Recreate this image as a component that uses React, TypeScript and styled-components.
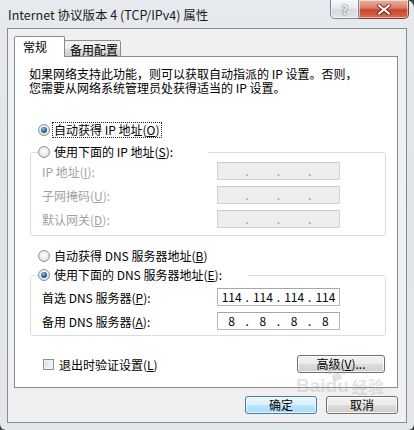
import styled, { createGlobalStyle } from 'styled-components';

const GlobalStyle = createGlobalStyle`
  html, body {
    margin: 0;
    padding: 0;
    background: #3c3f44;
  }
  body {
    font-family: "Noto Sans CJK SC", "Noto Sans", sans-serif;
  }
`;

const Window = styled.div`
  position: relative;
  width: 414px;
  height: 430px;
  display: flex;
  flex-direction: column;
  background: linear-gradient(180deg, #e6eaee 0%, #dfe4e9 45%, #e3e7eb 100%);
  border-radius: 0 8px 6px 6px;
  overflow: hidden;
`;

const TitleBar = styled.div`
  height: 28px;
  flex-shrink: 0;
  display: flex;
  align-items: flex-start;
`;

const Title = styled.div`
  padding: 7px 0 0 8px;
  font-size: 12.5px;
  line-height: 16px;
  color: #1b1b1b;
  white-space: nowrap;
`;

const Captions = styled.div`
  margin-left: auto;
  margin-right: 5px;
  display: flex;
`;

const CaptionButton = styled.div<{ $close?: boolean }>`
  box-sizing: border-box;
  width: ${p => (p.$close ? 50 : 29)}px;
  height: 20px;
  margin-top: -1px;
  border: 1px solid ${p => (p.$close ? '#7a3a30' : '#7d8590')};
  border-left-width: ${p => (p.$close ? 0 : 1)}px;
  border-radius: ${p => (p.$close ? '0 0 5px 0' : '0 0 0 5px')};
  background: ${p =>
    p.$close
      ? 'linear-gradient(180deg, #ecb3a6 0%, #dc7a63 45%, #c9452b 55%, #d86b4f 100%)'
      : 'linear-gradient(180deg, #f7f8fa 0%, #e7eaee 45%, #d3d8de 55%, #e2e6ea 100%)'};
  box-shadow: inset 0 0 0 1px rgba(255, 255, 255, 0.55);
  display: flex;
  align-items: center;
  justify-content: center;
  font-size: 13px;
  font-weight: bold;
  color: #f4f6f8;
  text-shadow: 0 0 2px #5a6470, 0 0 1px #5a6470;
`;

const Client = styled.div`
  flex: 1;
  margin: 0 7px 7px 7px;
  border: 1px solid #868b92;
  background: #f0f0f0;
  padding: 7px 8px 8px 6px;
  display: flex;
  flex-direction: column;
  font-size: 12px;
  color: #000;
`;

const TabRow = styled.div`
  display: flex;
  align-items: flex-end;
  margin-bottom: -1px;
  position: relative;
  z-index: 1;
`;

const Tab = styled.div<{ $active?: boolean }>`
  box-sizing: border-box;
  width: ${p => (p.$active ? 51 : 57)}px;
  height: ${p => (p.$active ? 21 : 17)}px;
  margin-left: ${p => (p.$active ? 0 : -1)}px;
  padding: ${p => (p.$active ? '2px 0 0 8px' : '1px 0 0 5px')};
  border: 1px solid #898c95;
  border-bottom: ${p => (p.$active ? 'none' : '1px solid #898c95')};
  border-radius: 2px 2px 0 0;
  background: ${p =>
    p.$active ? '#fff' : 'linear-gradient(180deg, #f4f4f4 0%, #ececec 50%, #dedede 51%, #d2d2d2 100%)'};
  font-size: 12px;
  line-height: 15px;
  white-space: nowrap;
`;

const Panel = styled.div`
  flex: 1;
  border: 1px solid #898c95;
  background: #fff;
  padding: 10px 10px 0 14px;
  display: flex;
  flex-direction: column;
`;

const IntroLine = styled.div`
  font-size: 12px;
  line-height: 14px;
  height: 14px;
  white-space: nowrap;
`;

const OptionRow = styled.label<{ $top: number }>`
  display: flex;
  align-items: center;
  height: 16px;
  margin: ${p => p.$top}px 0 0 9px;
  gap: 2px;
  white-space: nowrap;
`;

const Radio = styled.span<{ $checked?: boolean }>`
  box-sizing: border-box;
  width: 12px;
  height: 12px;
  flex-shrink: 0;
  border-radius: 50%;
  border: 1px solid #8b9095;
  background: radial-gradient(circle at 50% 40%, #fdfdfd 0%, #ebebeb 55%, #cdd0d3 100%);
  display: flex;
  align-items: center;
  justify-content: center;

  &::after {
    content: '';
    display: ${p => (p.$checked ? 'block' : 'none')};
    width: 6px;
    height: 6px;
    border-radius: 50%;
    background: radial-gradient(circle at 40% 35%, #9cc8ee 0%, #2e6aa6 45%, #173c64 100%);
  }
`;

const OptionText = styled.span<{ $focus?: boolean }>`
  padding: 0 1px;
  line-height: 14px;
  border: 1px ${p => (p.$focus ? 'dotted #222' : 'solid transparent')};
`;

const Group = styled.fieldset<{ $top: number; $padTop: number; $padBottom: number }>`
  margin: ${p => p.$top}px 1px 0 1px;
  padding: ${p => p.$padTop}px 0 ${p => p.$padBottom}px 7px;
  border: 1px solid #d5dfe5;
  border-radius: 3px;
  min-width: 0;
`;

const Legend = styled.legend<{ $w: number }>`
  box-sizing: border-box;
  width: ${p => p.$w}px;
  height: 16px;
  padding: 0;
  display: flex;
  align-items: center;
  gap: 2px;
  white-space: nowrap;
`;

const FieldGrid = styled.div`
  display: grid;
  grid-template-columns: 175px 123px;
  row-gap: 6px;
  margin-left: 4px;
`;

const FieldLabel = styled.span<{ $disabled?: boolean }>`
  display: flex;
  align-items: center;
  height: 18px;
  color: ${p => (p.$disabled ? '#a2a2a2' : '#000')};
  white-space: nowrap;
`;

const IpBox = styled.div<{ $disabled?: boolean }>`
  box-sizing: border-box;
  width: 123px;
  height: 18px;
  border: 1px solid ${p => (p.$disabled ? '#d2d2d2' : '#b5b8bf')};
  border-top-color: ${p => (p.$disabled ? '#cacaca' : '#a4a7ae')};
  background: ${p => (p.$disabled ? '#eeeeee' : '#fff')};
  color: ${p => (p.$disabled ? '#9c9c9c' : '#000')};
  display: flex;
  align-items: center;
  font-size: 12px;
  line-height: 14px;
`;

const IpPart = styled.span`
  flex: 1;
  text-align: center;
`;

const IpDot = styled.span`
  width: 4px;
  text-align: center;
`;

const BottomRow = styled.div`
  display: flex;
  align-items: center;
  margin: 19px 2px 0 14px;
`;

const CheckBox = styled.span`
  box-sizing: border-box;
  width: 11px;
  height: 11px;
  border: 1px solid #8e8f8f;
  background: linear-gradient(135deg, #d6d8da 0%, #eef0f1 60%, #f8f8f8 100%);
  box-shadow: inset 0 0 0 1px #f4f4f4;
`;

const CheckText = styled.span`
  margin-left: 5px;
  white-space: nowrap;
`;

const Button = styled.div<{ $w: number; $default?: boolean }>`
  box-sizing: border-box;
  width: ${p => p.$w}px;
  height: 18px;
  border: 1px solid ${p => (p.$default ? '#3c7fb1' : '#707070')};
  border-radius: 3px;
  background: ${p =>
    p.$default
      ? 'linear-gradient(180deg, #eaf6fd 0%, #d9f0fc 50%, #bee6fd 51%, #a7d9f5 100%)'
      : 'linear-gradient(180deg, #f2f2f2 0%, #ebebeb 50%, #dddddd 51%, #cfcfcf 100%)'};
  box-shadow: inset 0 0 0 1px rgba(255, 255, 255, 0.75);
  display: flex;
  align-items: center;
  justify-content: center;
  font-size: 12px;
  line-height: 14px;
  white-space: nowrap;
`;

const AdvancedButton = styled(Button)`
  margin-left: auto;
`;

const ButtonRow = styled.div`
  display: flex;
  justify-content: flex-end;
  gap: 9px;
  margin-top: 8px;
`;

const Watermark = styled.div`
  position: absolute;
  left: 296px;
  top: 376px;
  display: flex;
  align-items: flex-end;
  font-family: "Liberation Sans", sans-serif;
  font-size: 19px;
  line-height: 19px;
  font-weight: bold;
  color: rgba(170, 175, 180, 0.35);
  pointer-events: none;
  white-space: nowrap;
`;

const MarkCJK = styled.span`
  font-family: "Noto Sans CJK SC", sans-serif;
  font-size: 16px;
  line-height: 18px;
  margin-left: 3px;
`;

const Paw = styled.svg`
  position: absolute;
  left: 30px;
  top: -12px;
`;

function Ip({ parts, disabled }: { parts: string[]; disabled?: boolean }) {
  return (
    <IpBox $disabled={disabled}>
      <IpPart>{parts[0]}</IpPart>
      <IpDot>.</IpDot>
      <IpPart>{parts[1]}</IpPart>
      <IpDot>.</IpDot>
      <IpPart>{parts[2]}</IpPart>
      <IpDot>.</IpDot>
      <IpPart>{parts[3]}</IpPart>
    </IpBox>
  );
}

const empty = ['', '', '', ''];

export default function App() {
  return (
    <>
      <GlobalStyle />
      <Window>
        <TitleBar>
          <Title>Internet 协议版本 4 (TCP/IPv4) 属性</Title>
          <Captions>
            <CaptionButton>?</CaptionButton>
            <CaptionButton $close>
              <svg width="14" height="11" viewBox="0 0 14 11">
                <path d="M2 1.5 L12 9.5 M12 1.5 L2 9.5" stroke="#6b2a20" strokeWidth="4" strokeLinecap="round" />
                <path d="M2 1.5 L12 9.5 M12 1.5 L2 9.5" stroke="#ffffff" strokeWidth="2.2" strokeLinecap="round" />
              </svg>
            </CaptionButton>
          </Captions>
        </TitleBar>

        <Client>
          <TabRow>
            <Tab $active>常规</Tab>
            <Tab>备用配置</Tab>
          </TabRow>

          <Panel>
            <IntroLine>如果网络支持此功能，则可以获取自动指派的 IP 设置。否则，</IntroLine>
            <IntroLine>您需要从网络系统管理员处获得适当的 IP 设置。</IntroLine>

            <OptionRow $top={27}>
              <Radio $checked />
              <OptionText $focus>
                自动获得 IP 地址(<u>O</u>)
              </OptionText>
            </OptionRow>

            <Group $top={6} $padTop={2} $padBottom={7}>
              <Legend $w={170}>
                <Radio />
                <OptionText>
                  使用下面的 IP 地址(<u>S</u>):
                </OptionText>
              </Legend>
              <FieldGrid>
                <FieldLabel $disabled>
                  IP 地址(<u>I</u>):
                </FieldLabel>
                <Ip parts={empty} disabled />
                <FieldLabel $disabled>
                  子网掩码(<u>U</u>):
                </FieldLabel>
                <Ip parts={empty} disabled />
                <FieldLabel $disabled>
                  默认网关(<u>D</u>):
                </FieldLabel>
                <Ip parts={empty} disabled />
              </FieldGrid>
            </Group>

            <OptionRow $top={12}>
              <Radio />
              <OptionText>
                自动获得 DNS 服务器地址(<u>B</u>)
              </OptionText>
            </OptionRow>

            <Group $top={3} $padTop={5} $padBottom={5}>
              <Legend $w={210}>
                <Radio $checked />
                <OptionText>
                  使用下面的 DNS 服务器地址(<u>E</u>):
                </OptionText>
              </Legend>
              <FieldGrid>
                <FieldLabel>
                  首选 DNS 服务器(<u>P</u>):
                </FieldLabel>
                <Ip parts={['114', '114', '114', '114']} />
                <FieldLabel>
                  备用 DNS 服务器(<u>A</u>):
                </FieldLabel>
                <Ip parts={['8', '8', '8', '8']} />
              </FieldGrid>
            </Group>

            <BottomRow>
              <CheckBox />
              <CheckText>
                退出时验证设置(<u>L</u>)
              </CheckText>
              <AdvancedButton $w={88}>
                高级(<u>V</u>)...
              </AdvancedButton>
            </BottomRow>
          </Panel>

          <ButtonRow>
            <Button $w={72} $default>
              确定
            </Button>
            <Button $w={72}>取消</Button>
          </ButtonRow>
        </Client>

        <Watermark>
          Bai
          <span>du</span>
          <MarkCJK>经验</MarkCJK>
          <Paw width="22" height="18" viewBox="0 0 22 18">
            <g fill="rgba(170,175,180,0.35)">
              <ellipse cx="11" cy="13" rx="5" ry="4" />
              <ellipse cx="4" cy="8" rx="2.2" ry="2.8" />
              <ellipse cx="8.5" cy="3.5" rx="2.2" ry="2.8" />
              <ellipse cx="13.5" cy="3.5" rx="2.2" ry="2.8" />
              <ellipse cx="18" cy="8" rx="2.2" ry="2.8" />
            </g>
          </Paw>
        </Watermark>
      </Window>
    </>
  );
}
